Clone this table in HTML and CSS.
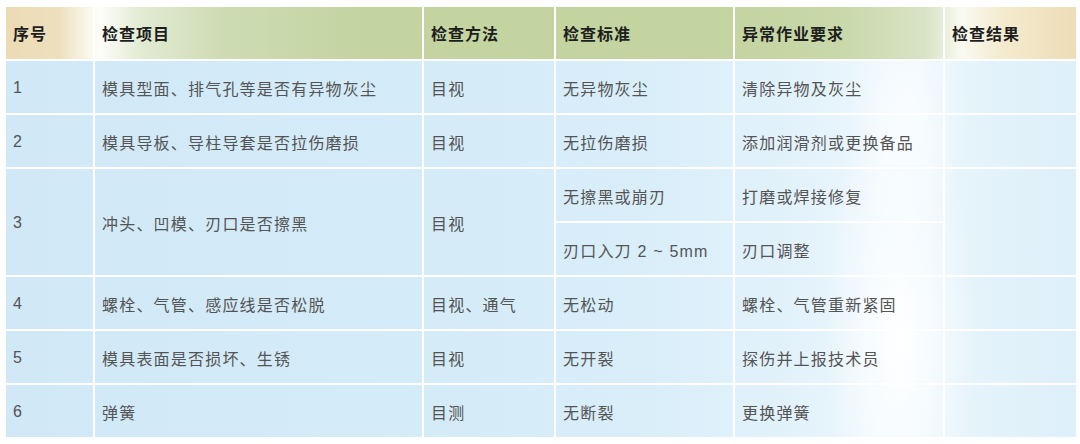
FILE: index.html
```html
<!DOCTYPE html>
<html lang="zh-CN">
<head>
<meta charset="utf-8">
<title>模具检查表</title>
<link rel="stylesheet" href="styles.css">
</head>
<body>
<div class="table">
  <div class="cell head">序号</div>
  <div class="cell head">检查项目</div>
  <div class="cell head">检查方法</div>
  <div class="cell head">检查标准</div>
  <div class="cell head">异常作业要求</div>
  <div class="cell head">检查结果</div>

  <div class="cell">1</div>
  <div class="cell">模具型面、排气孔等是否有异物灰尘</div>
  <div class="cell">目视</div>
  <div class="cell">无异物灰尘</div>
  <div class="cell">清除异物及灰尘</div>
  <div class="cell"></div>

  <div class="cell">2</div>
  <div class="cell">模具导板、导柱导套是否拉伤磨损</div>
  <div class="cell">目视</div>
  <div class="cell">无拉伤磨损</div>
  <div class="cell">添加润滑剂或更换备品</div>
  <div class="cell"></div>

  <div class="cell span2">3</div>
  <div class="cell span2">冲头、凹模、刃口是否擦黑</div>
  <div class="cell span2">目视</div>
  <div class="cell">无擦黑或崩刃</div>
  <div class="cell">打磨或焊接修复</div>
  <div class="cell span2"></div>
  <div class="cell">刃口入刀 2 ~ 5mm</div>
  <div class="cell">刃口调整</div>

  <div class="cell">4</div>
  <div class="cell">螺栓、气管、感应线是否松脱</div>
  <div class="cell">目视、通气</div>
  <div class="cell">无松动</div>
  <div class="cell">螺栓、气管重新紧固</div>
  <div class="cell"></div>

  <div class="cell">5</div>
  <div class="cell">模具表面是否损坏、生锈</div>
  <div class="cell">目视</div>
  <div class="cell">无开裂</div>
  <div class="cell">探伤并上报技术员</div>
  <div class="cell"></div>

  <div class="cell">6</div>
  <div class="cell">弹簧</div>
  <div class="cell">目测</div>
  <div class="cell">无断裂</div>
  <div class="cell">更换弹簧</div>
  <div class="cell"></div>
</div>
</body>
</html>
```

FILE: styles.css
```css
html, body {
  margin: 0;
  padding: 0;
  background: #ffffff;
}

body {
  padding: 7px 4px 0 6px;
  font-family: "Liberation Sans", "Noto Sans CJK SC", sans-serif;
}

.table {
  display: grid;
  grid-template-columns: 87px 327px 130px 177px 208px 131px;
  grid-auto-rows: 52px;
  gap: 2px;
  width: 1070px;
}

.cell {
  display: flex;
  align-items: center;
  padding: 1px 0 0 7px;
  font-size: 16px;
  letter-spacing: 1.2px;
  color: #545454;
  background:
    radial-gradient(ellipse 75px 280px at 900px 340px, rgba(255,255,255,1), rgba(255,255,255,0) 100%),
    radial-gradient(ellipse 60px 140px at 910px 110px, rgba(255,255,255,0.7), rgba(255,255,255,0) 100%),
    linear-gradient(90deg, #d1e9f7 0px, #d4ebf8 420px, #d9eef9 640px, #e3f2fb 800px, #edf7fd 880px, #e6f4fb 960px, #ddeffa 1080px);
  background-attachment: fixed;
}

.cell.head {
  padding-top: 0;
  font-weight: bold;
  letter-spacing: 1px;
  color: #1e1e1e;
  background: linear-gradient(90deg,
    #ebdab2 0px,
    #eee0bf 60px,
    #f8f4e6 85px,
    #fdfdf8 100px,
    #e2ebd3 140px,
    #cedcb4 220px,
    #c3d4a1 360px,
    #c3d4a1 720px,
    #c8d8a9 840px,
    #d8e3c5 925px,
    #f9faf0 962px,
    #f4ebd0 1000px,
    #eddcb5 1080px);
  background-attachment: fixed;
}

.cell.span2 {
  grid-row: span 2;
}
```
